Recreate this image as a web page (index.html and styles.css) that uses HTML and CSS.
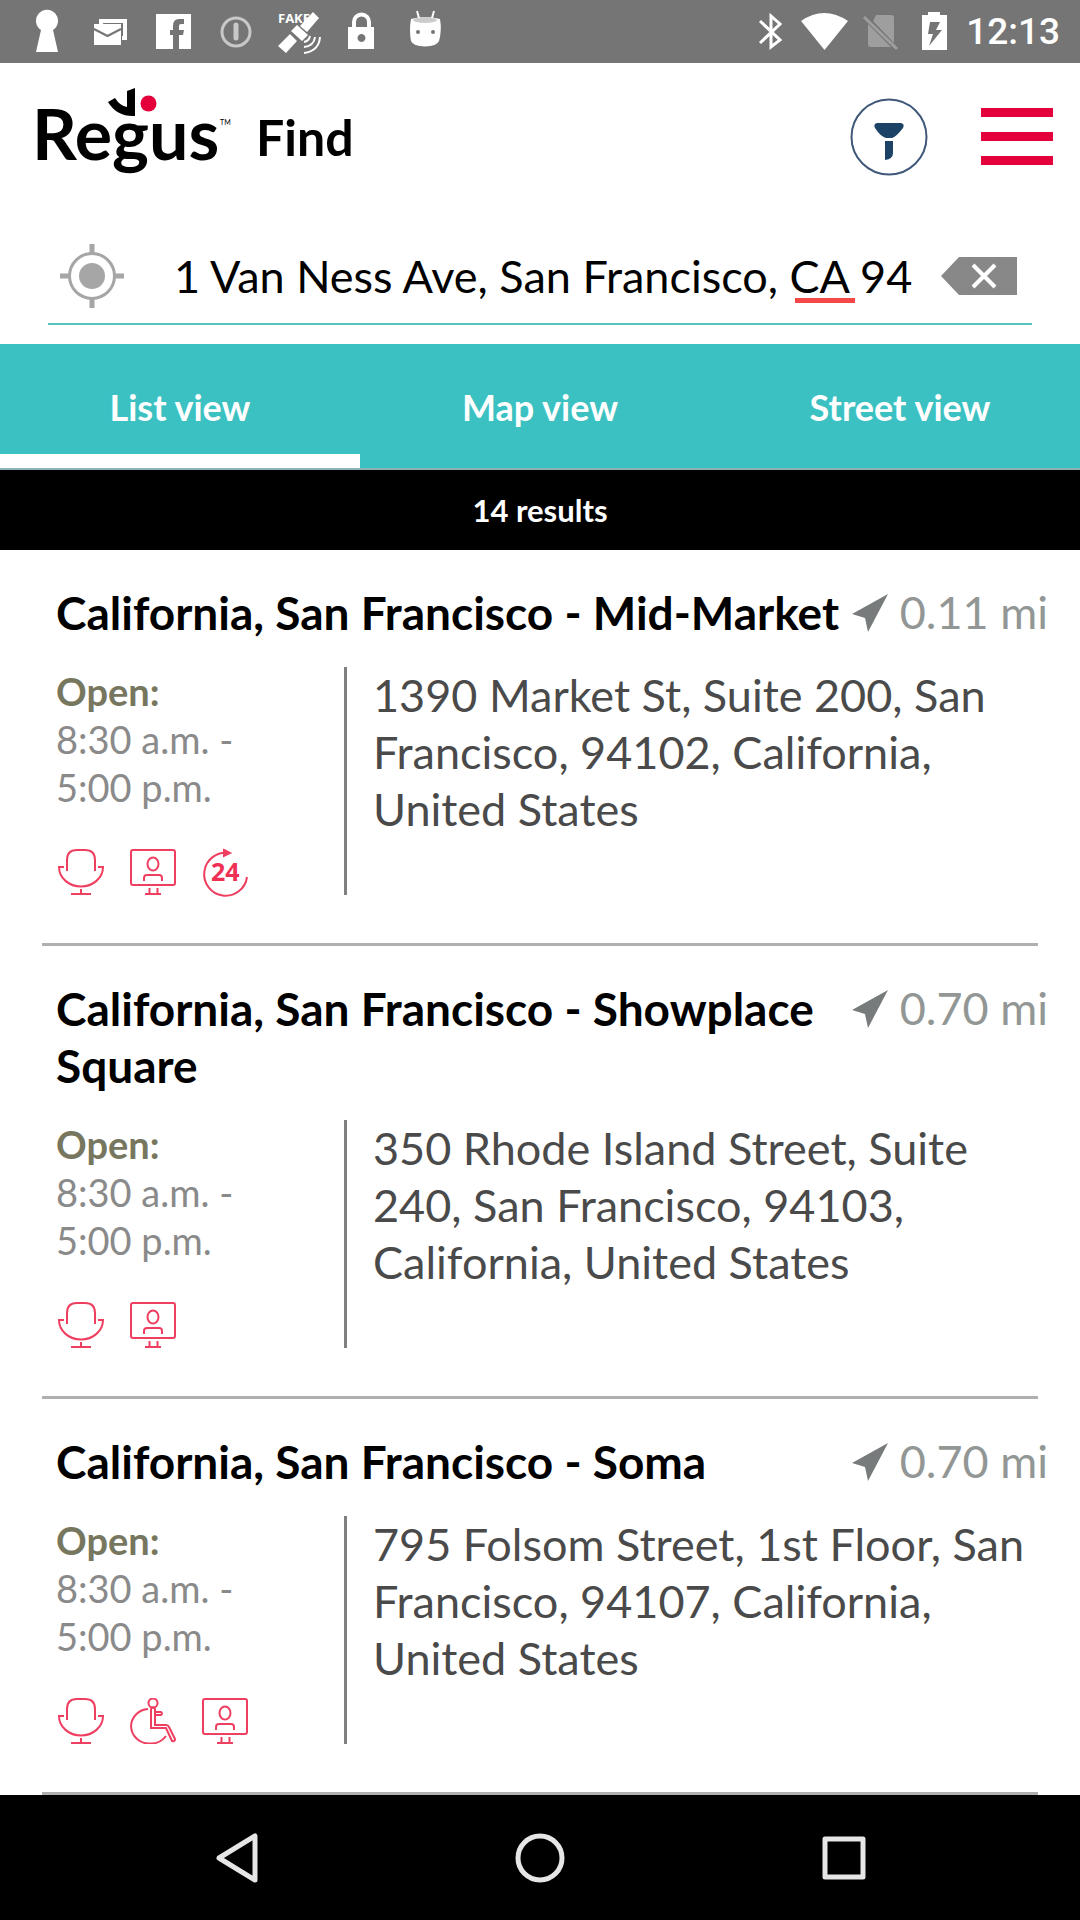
FILE: index.html
```html
<!DOCTYPE html>
<html lang="en">
<head>
<meta charset="utf-8">
<meta name="viewport" content="width=device-width, initial-scale=1">
<title>Regus – Find</title>
<link rel="stylesheet" href="styles.css">
</head>
<body>
<svg class="defs" aria-hidden="true">
  <symbol id="chair" viewBox="0 0 46 46">
    <path d="M9 22V11Q9 1 19 1H27Q37 1 37 11V22M6 18H1C1 29 11 37.500 23 37.500S45 29 45 18H40M23 40V45M13 45H33"/>
  </symbol>
  <symbol id="screen" viewBox="0 0 46 46">
    <rect x="1" y="1" width="44" height="35" rx="2"/>
    <ellipse cx="23" cy="15" rx="5.500" ry="6.500"/>
    <path d="M14 32V29Q14 26 17 26H29Q32 26 32 29V32M19.500 39V45M27.500 39V45M15 45H31"/>
  </symbol>
  <symbol id="wheelchair" viewBox="0 0 46 46">
    <circle cx="23" cy="5" r="4.500"/>
    <path d="M18 11A18 18 0 0 0 1 28A18 18 0 0 0 20 45.500Q30 46 36 38M21 11Q23 8 25 11V27H36Q38 27 39 29L45 41Q45 44 42 43L36 30H21ZM25 14H31Q33 15.500 31 17H25"/>
  </symbol>
  <symbol id="arrow" viewBox="0 0 36 38">
    <path d="M36 0L16 38L13 24L0 20Z"/>
  </symbol>
</svg>

<div class="status">
  <div class="status-left">
    <svg width="160" height="64" viewBox="32 0 160 64" aria-hidden="true">
      <path fill="#fff" d="M36 52L41 30A11 11 0 1 1 53 30L58 52Z"/>
      <path fill="#fff" d="M99 19H127V40H122V36H123V23H103V24H99Z"/>
      <path fill="#fff" d="M94 24H121V45H94Z"/>
      <path fill="none" stroke="#757575" stroke-width="2" d="M94 29L107.500 36L121 29"/>
      <path fill="#fff" d="M156 14H191V49H179V35H183L184 30H179V26Q179 24 181 24H184V19H179Q173 19 173 26V30H170V35H173V49H156Z"/>
    </svg>
    <svg width="250" height="64" viewBox="192 0 250 64" aria-hidden="true">
      <circle cx="236" cy="32" r="14" fill="none" stroke="#c8c8c8" stroke-width="3"/>
      <path stroke="#c8c8c8" stroke-width="5" stroke-linecap="round" d="M236 25V38"/>
      <text class="fake" x="278" y="23">FAKE</text>
      <path fill="#fff" d="M313 12L319 18L307 32L300 26ZM297 25L308 35L302 41L291 31ZM290 34L297 41L286 53L278 46Z"/>
      <path fill="none" stroke="#fff" stroke-width="2" d="M304 42Q309 41 310 36M304 47Q314 46 315 37M304 53Q319 51 320 37"/>
      <path fill="#fff" fill-rule="evenodd" d="M348 27H352V22A9 9 0 0 1 371 22V27H374V49H348ZM356 27H367V22A5 5 0 0 0 356 22ZM361 34A4 4 0 1 0 362 34Z"/>
      <path fill="#fff" d="M411 19Q425 15 440 19Q442 30 439 41Q437 46 425 46.500Q413 46 411 41Q409 30 411 19Z"/>
      <ellipse cx="425" cy="20" rx="12" ry="3" fill="#ccc"/>
      <path stroke="#fff" stroke-width="2" d="M417 11L419 18M434 11L432 18"/>
      <circle cx="418" cy="32" r="2" fill="#757575"/><circle cx="433" cy="32" r="2" fill="#757575"/>
    </svg>
  </div>
  <div class="status-right">
    <svg width="190" height="64" viewBox="758 0 190 64" aria-hidden="true">
      <path fill="none" stroke="#fff" stroke-width="3" d="M760 21L780 40L771 47V16L780 24L760 43"/>
      <path fill="#fff" d="M801 21Q824 5 848 21L824.500 50Z"/>
      <path fill="#9e9e9e" d="M876 15H891Q894 15 894 18V43L873 21ZM868 24L891 47H871Q868 47 868 44Z"/>
      <path stroke="#9e9e9e" stroke-width="3" d="M864 17L897 49"/>
      <path fill="#fff" fill-rule="evenodd" d="M928 12H940V15H947V50H922V15H928ZM930 22L928 34H933L929 46L942 30H936L940 22Z"/>
    </svg>
    <time class="clock">12:13</time>
  </div>
</div>

<header class="header">
  <a class="logo" href="#" aria-label="Regus home">
    <svg width="212" height="110" viewBox="24 82 212 110">
      <text class="logo-word" x="32" y="160">Regus</text>
      <text class="logo-tm" x="220" y="125">TM</text>
      <path d="M108 102L115 98Q120 106 127 107V91L135 88V116Q117 117 108 102Z"/>
      <circle cx="148.500" cy="103.500" r="8" fill="#e4003a"/>
    </svg>
  </a>
  <h1 class="title">Find</h1>
  <button class="icon-btn filter" type="button" aria-label="Filter">
    <svg width="78" height="78" viewBox="0 0 78 78">
      <circle cx="39" cy="39" r="37.500" fill="none" stroke="#3f5878" stroke-width="2"/>
      <path fill="#1c4266" d="M27 25H51Q55 26 53 30Q46 39 42 40H36Q30 38 25 30Q23 26 27 25ZM35 43H43V55Q43 61 35 62Z"/>
    </svg>
  </button>
  <button class="icon-btn menu" type="button" aria-label="Menu">
    <svg width="72" height="57" viewBox="0 0 72 57"><path fill="#e4003a" d="M0 0H72V9H0ZM0 24H72V33H0ZM0 48H72V57H0Z"/></svg>
  </button>
</header>

<form class="search">
  <button class="icon-btn" type="button" aria-label="Use my location">
    <svg width="64" height="64" viewBox="0 0 64 64">
      <circle cx="32" cy="32" r="22.500" fill="none" stroke="#a6a6a6" stroke-width="3"/>
      <circle cx="32" cy="32" r="13" fill="#a6a6a6"/>
      <path stroke="#a6a6a6" stroke-width="5" d="M32 0V9M32 55V64M0 32H9M55 32H64"/>
    </svg>
  </button>
  <div class="field">
    <input class="query" type="text" aria-label="Location" value="1 Van Ness Ave, San Francisco, CA 94" spellcheck="false">
    <span class="typo"></span>
  </div>
  <button class="icon-btn" type="reset" aria-label="Clear">
    <svg width="76" height="38" viewBox="0 0 76 38">
      <path fill="#888" d="M0 19L18 0H76V38H18Z"/>
      <path stroke="#fff" stroke-width="4" d="M32 8L54 30M54 8L32 30"/>
    </svg>
  </button>
</form>

<nav class="tabs">
  <a class="tab tab-active" href="#list">List view</a>
  <a class="tab" href="#map">Map view</a>
  <a class="tab" href="#street">Street view</a>
</nav>
<p class="count">14 results</p>

<main class="results">
  <article class="card">
    <div class="card-head">
      <h2 class="name">California, San Francisco - Mid-Market</h2>
      <span class="distance"><svg width="36" height="38"><use href="#arrow"/></svg>0.11 mi</span>
    </div>
    <div class="card-body">
      <div class="info">
        <p class="hours"><strong>Open:</strong> 8:30 a.m. - 5:00 p.m.</p>
        <div class="amenities">
          <svg><use href="#chair"/></svg>
          <svg><use href="#screen"/></svg>
          <svg viewBox="0 0 46 46">
            <path d="M27 4A21.500 21.500 0 1 0 45 28"/>
            <path class="solid" d="M22 1L28 4L22 7Z"/>
            <text class="day" x="9" y="32">24</text>
          </svg>
        </div>
      </div>
      <address class="address">1390 Market St, Suite 200, San Francisco, 94102, California, United States</address>
    </div>
  </article>
  <article class="card">
    <div class="card-head">
      <h2 class="name">California, San Francisco - Showplace Square</h2>
      <span class="distance"><svg width="36" height="38"><use href="#arrow"/></svg>0.70 mi</span>
    </div>
    <div class="card-body">
      <div class="info">
        <p class="hours"><strong>Open:</strong> 8:30 a.m. - 5:00 p.m.</p>
        <div class="amenities">
          <svg><use href="#chair"/></svg>
          <svg><use href="#screen"/></svg>
        </div>
      </div>
      <address class="address">350 Rhode Island Street, Suite 240, San Francisco, 94103, California, United States</address>
    </div>
  </article>
  <article class="card">
    <div class="card-head">
      <h2 class="name">California, San Francisco - Soma</h2>
      <span class="distance"><svg width="36" height="38"><use href="#arrow"/></svg>0.70 mi</span>
    </div>
    <div class="card-body">
      <div class="info">
        <p class="hours"><strong>Open:</strong> 8:30 a.m. - 5:00 p.m.</p>
        <div class="amenities">
          <svg><use href="#chair"/></svg>
          <svg><use href="#wheelchair"/></svg>
          <svg><use href="#screen"/></svg>
        </div>
      </div>
      <address class="address">795 Folsom Street, 1st Floor, San Francisco, 94107, California, United States</address>
    </div>
  </article>
</main>

<nav class="system-nav">
  <button class="icon-btn" type="button" aria-label="Back">
    <svg width="50" height="50" viewBox="0 0 50 50"><path d="M44 3V47L8 25Z"/></svg>
  </button>
  <button class="icon-btn" type="button" aria-label="Home">
    <svg width="50" height="50" viewBox="0 0 50 50"><circle cx="25" cy="25" r="22"/></svg>
  </button>
  <button class="icon-btn" type="button" aria-label="Recent apps">
    <svg width="50" height="50" viewBox="0 0 50 50"><rect x="6" y="6" width="38" height="38"/></svg>
  </button>
</nav>
</body>
</html>
```
FILE: styles.css
```css
* {
  box-sizing: border-box;
}

body {
  display: flex;
  flex-direction: column;
  min-height: 100vh;
  margin: 0;
  background: #fff;
  color: #000;
  font-family: Lato, "Open Sans", sans-serif;
}

h1, h2, p {
  margin: 0;
}

svg {
  display: block;
  flex: none;
}

.defs {
  position: absolute;
  width: 0;
  height: 0;
}

.icon-btn {
  flex: none;
  padding: 0;
  border: 0;
  background: none;
}

/* Status bar */
.status {
  display: flex;
  justify-content: space-between;
  height: 63px;
  padding: 0 20px 0 32px;
  background: #757575;
  color: #fff;
}

.status-left,
.status-right {
  display: flex;
}

.status-right {
  gap: 18px;
}

.clock {
  font: 500 37px/64px Roboto, sans-serif;
}

.fake {
  fill: #fff;
  font: 700 13px "Open Sans", sans-serif;
}

/* Header */
.header {
  display: flex;
  align-items: center;
  height: 147px;
  padding: 0 27px 0 24px;
}

.logo-word {
  font-size: 70px;
  font-weight: 700;
}

.logo-tm {
  font-size: 7px;
}

.title {
  flex: 1;
  margin-left: 20px;
  font-size: 50px;
  line-height: 58px;
}

.menu {
  margin-left: 53px;
}

/* Search */
.search {
  display: flex;
  align-items: center;
  height: 97px;
  margin: 18px 48px 19px;
  padding: 0 15px 0 12px;
  border-bottom: 2px solid #54c4b8;
}

.field {
  position: relative;
  flex: 1;
  margin: 0 20px 0 50px;
}

.query {
  width: 100%;
  padding: 0;
  border: 0;
  outline: 0;
  background: none;
  color: #000;
  font: 400 45px/58px Lato, sans-serif;
}

.typo {
  position: absolute;
  right: 66px;
  bottom: 2px;
  width: 60px;
  height: 5px;
  background: #f44848;
}

/* Tabs */
.tabs {
  display: flex;
  height: 126px;
  border-bottom: 2px solid #8fb3b4;
  background: #3cc1c2;
}

.tab {
  flex: 1;
  border-bottom: 0 solid #fff;
  color: #fff;
  font-size: 36px;
  font-weight: 700;
  line-height: 126px;
  text-align: center;
  text-decoration: none;
}

.tab-active {
  border-bottom-width: 14px;
}

.count {
  background: #000;
  color: #fff;
  font-size: 31px;
  font-weight: 700;
  line-height: 80px;
  text-align: center;
}

/* Results */
.results {
  flex: 1;
}

.card {
  margin: 0 42px;
  padding: 34px 0 48px 14px;
  border-bottom: 3px solid #b0b0b0;
}

.card-head {
  display: flex;
  justify-content: space-between;
  gap: 4px;
  margin-right: -10px;
  font-size: 45px;
  line-height: 57px;
}

.name {
  font-size: 46px;
  font-weight: 700;
}

.distance {
  display: flex;
  gap: 12px;
  align-items: center;
  height: 57px;
  color: #929796;
  white-space: nowrap;
}

.distance svg {
  fill: #777b7b;
}

.card-body {
  display: flex;
  margin-top: 26px;
}

.info {
  width: 288px;
  padding-right: 80px;
}

.hours {
  height: 182px;
  color: #8a8a8a;
  font-size: 38px;
  line-height: 48px;
}

.hours strong {
  display: block;
  color: #77775f;
}

.amenities {
  display: flex;
  gap: 26px;
  margin-left: 2px;
}

.amenities svg {
  width: 46px;
  height: 46px;
  overflow: visible;
  fill: none;
  stroke: #ef3f60;
  stroke-width: 2;
}

.amenities .day {
  fill: #ef2f54;
  stroke: none;
  font: 700 25px "Open Sans", sans-serif;
}

.amenities .solid {
  fill: #ef3f60;
}

.address {
  flex: 1;
  padding-left: 26px;
  border-left: 3px solid #808080;
  color: #4a4a4a;
  font-size: 45px;
  font-style: normal;
  line-height: 57px;
}

/* System navigation */
.system-nav {
  display: flex;
  align-items: center;
  justify-content: center;
  gap: 254px;
  height: 126px;
  background: #000;
}

.system-nav svg {
  fill: none;
  stroke: #e6e6e6;
  stroke-width: 5;
  stroke-linejoin: round;
}
```
